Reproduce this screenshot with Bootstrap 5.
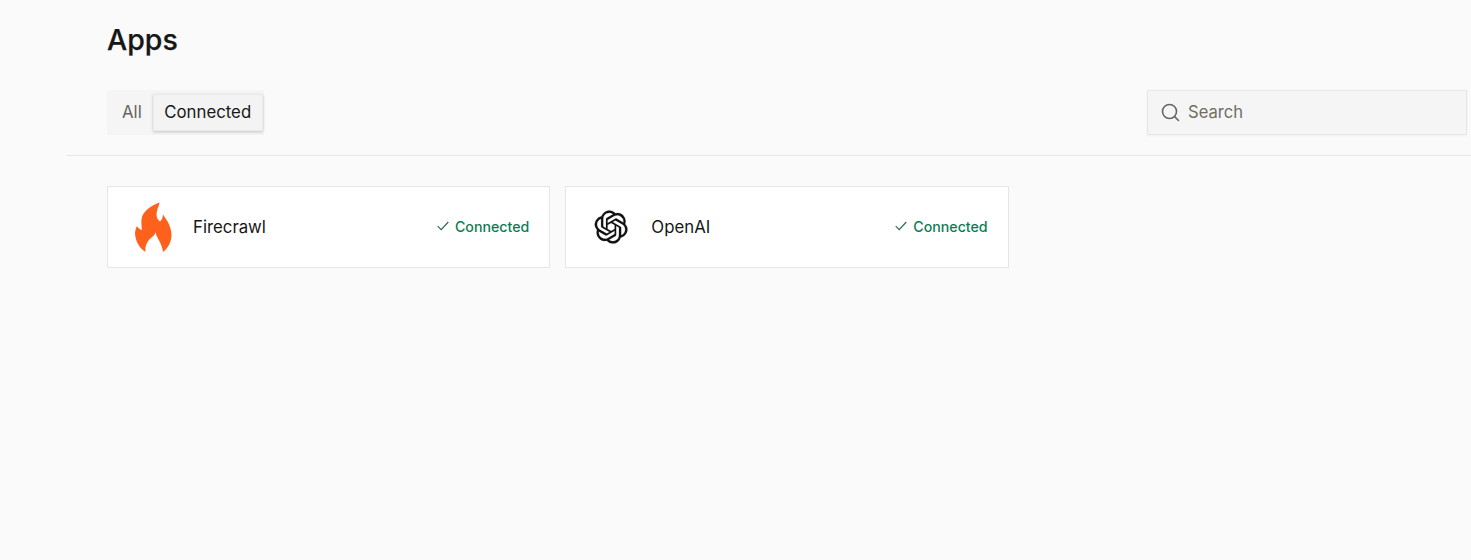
<!DOCTYPE html>
<html lang="en">
<head>
  <meta charset="UTF-8" />
  <title>Apps</title>
  <link href="https://cdn.jsdelivr.net/npm/bootstrap@5.3.2/dist/css/bootstrap.min.css" rel="stylesheet">
  <style>
    body {
      background: #fafafa;
      color: #171717;
      font-family: Inter, "Liberation Sans", sans-serif;
      height: 560px;
      overflow: hidden;
    }
    .apps-main {
      margin-left: 67px;
    }
    .apps-head {
      padding: 21px 4px 20px 40px;
      border-bottom: 1px solid #e8e8e8;
    }
    .apps-title {
      font-size: 28.5px;
      line-height: 38px;
      font-weight: 500;
      -webkit-text-stroke: .25px #171717;
      margin-bottom: 31px;
    }
    .tab-group {
      background: #f5f5f5;
      height: 45px;
      padding: 4px 1px 4px 15px;
    }
    .tab-item {
      font-size: 16.8px;
      line-height: 37px;
      height: 37px;
      padding: 0;
      color: #66665e;
      border: 0;
      background: none;
      border-radius: 0;
    }
    .tab-item.is-on {
      width: 110px;
      margin-left: 11px;
      color: #171717;
      background: #f3f3f3;
      border: 1px solid #eaeaea;
      line-height: 35px;
      box-shadow: 0 1px 3px rgba(0, 0, 0, .2);
    }
    .search-box {
      width: 320px;
      height: 45px;
      background: #f5f5f5;
      border: 1px solid #e6e6e6;
      padding-left: 13px;
      color: #6f6f62;
      font-size: 16.6px;
      box-shadow: 0 1px 2px rgba(0, 0, 0, .04);
    }
    .app-grid {
      display: grid;
      grid-template-columns: repeat(3, 1fr);
      gap: 15px;
      padding: 30px 4px 0 40px;
    }
    .app-tile {
      height: 82px;
      background: #fff;
      border: 1px solid #e6e6e6;
      padding: 0 20px 0 27px;
    }
    .app-logo {
      width: 37px;
      height: 50px;
      margin-right: 21px;
    }
    .app-name {
      font-size: 16.8px;
      font-weight: 400;
      padding-top: 2px;
    }
    .app-status {
      color: #0f7b56;
      font-size: 14.2px;
      font-weight: 500;
      gap: 6px;
      padding-bottom: 1px;
    }
  </style>
</head>
<body>
  <div class="apps-main">
    <div class="apps-head">
      <h1 class="apps-title">Apps</h1>
      <div class="d-flex justify-content-between align-items-center">
        <div class="tab-group d-flex">
          <button class="tab-item" type="button">All</button>
          <button class="tab-item is-on" type="button">Connected</button>
        </div>
        <div class="search-box d-flex align-items-center gap-2">
          <svg width="19" height="19" viewBox="0 0 19 19" fill="none" stroke="#66665e" stroke-width="1.6" stroke-linecap="round"><circle cx="8.5" cy="8.5" r="7"/><path d="M13.6 13.6 17.5 17.5"/></svg>
          <span>Search</span>
        </div>
      </div>
    </div>

    <div class="app-grid">
      <div class="app-tile d-flex align-items-center">
        <svg class="app-logo" viewBox="0 0 37 50" fill="#fd611b"><path d="M24.500.5C18 3 9 8 7 15 6 19 6.300 23 7 28 5 27.500 3 26 2 24 .3 27-.3 31 .3 34 1.500 41 5 46.500 10.500 50 9.500 44 13 38 16 36 18 34.500 20 33 20.500 30 21 35 27 41 28 50 33 46 36.500 40 36.500 33 36.500 25 32 18 28 12.500 28 15 27 17.500 25 19.500 21.500 17 21 13 22 9 22.500 6 24.500 2.500 24.500.5Z"/></svg>
        <span class="app-name flex-grow-1">Firecrawl</span>
        <span class="app-status d-flex align-items-center">
          <svg width="12" height="10" viewBox="0 0 12 10" fill="none" stroke="#2a6b56" stroke-width="1.200"><path d="M.7 5.200 4.200 8.700 11.300 1"/></svg>
          Connected
        </span>
      </div>
      <div class="app-tile d-flex align-items-center">
        <svg class="app-logo" viewBox="-1.200 -6 27 36" fill="#111" stroke="#111" stroke-width=".15"><path d="M22.2819 9.8211a5.9847 5.9847 0 0 0-.5157-4.9108 6.0462 6.0462 0 0 0-6.5098-2.9A6.0651 6.0651 0 0 0 4.9807 4.1818a5.9847 5.9847 0 0 0-3.9977 2.9 6.0462 6.0462 0 0 0 .7427 7.0966 5.98 5.98 0 0 0 .511 4.9107 6.051 6.051 0 0 0 6.5146 2.9001A5.9847 5.9847 0 0 0 13.2599 24a6.0557 6.0557 0 0 0 5.7718-4.2058 5.9894 5.9894 0 0 0 3.9977-2.9001 6.0557 6.0557 0 0 0-.7475-7.0729zm-9.022 12.6081a4.4755 4.4755 0 0 1-2.8764-1.0408l.1419-.0804 4.7783-2.7582a.7948.7948 0 0 0 .3927-.6813v-6.7369l2.02 1.1686a.071.071 0 0 1 .038.052v5.5826a4.504 4.504 0 0 1-4.4945 4.4944zm-9.6607-4.1254a4.4708 4.4708 0 0 1-.5346-3.0137l.142.0852 4.783 2.7582a.7712.7712 0 0 0 .7806 0l5.8428-3.3685v2.3324a.0804.0804 0 0 1-.0332.0615L9.74 19.9502a4.4992 4.4992 0 0 1-6.1408-1.6464zM2.3408 7.8956a4.485 4.485 0 0 1 2.3655-1.9728V11.6a.7664.7664 0 0 0 .3879.6765l5.8144 3.3543-2.0201 1.1685a.0757.0757 0 0 1-.071 0l-4.8303-2.7865A4.504 4.504 0 0 1 2.3408 7.872zm16.5963 3.8558L13.1038 8.364 15.1192 7.2a.0757.0757 0 0 1 .071 0l4.8303 2.7913a4.4944 4.4944 0 0 1-.6765 8.1042v-5.6772a.79.79 0 0 0-.407-.667zm2.0107-3.0231l-.142-.0852-4.7735-2.7818a.7759.7759 0 0 0-.7854 0L9.409 9.2297V6.8974a.0662.0662 0 0 1 .0284-.0615l4.8303-2.7866a4.4992 4.4992 0 0 1 6.6802 4.66zM8.3065 12.863l-2.02-1.1638a.0804.0804 0 0 1-.038-.0567V6.0742a4.4992 4.4992 0 0 1 7.3757-3.4537l-.142.0805L8.704 5.459a.7948.7948 0 0 0-.3927.6813zm1.0976-2.3654l2.602-1.4998 2.6069 1.4998v2.9994l-2.5974 1.4997-2.6067-1.4997Z"/></svg>
        <span class="app-name flex-grow-1">OpenAI</span>
        <span class="app-status d-flex align-items-center">
          <svg width="12" height="10" viewBox="0 0 12 10" fill="none" stroke="#2a6b56" stroke-width="1.200"><path d="M.7 5.200 4.200 8.700 11.300 1"/></svg>
          Connected
        </span>
      </div>
    </div>
  </div>
  <script src="https://cdn.jsdelivr.net/npm/bootstrap@5.3.2/dist/js/bootstrap.bundle.min.js"></script>
</body>
</html>
